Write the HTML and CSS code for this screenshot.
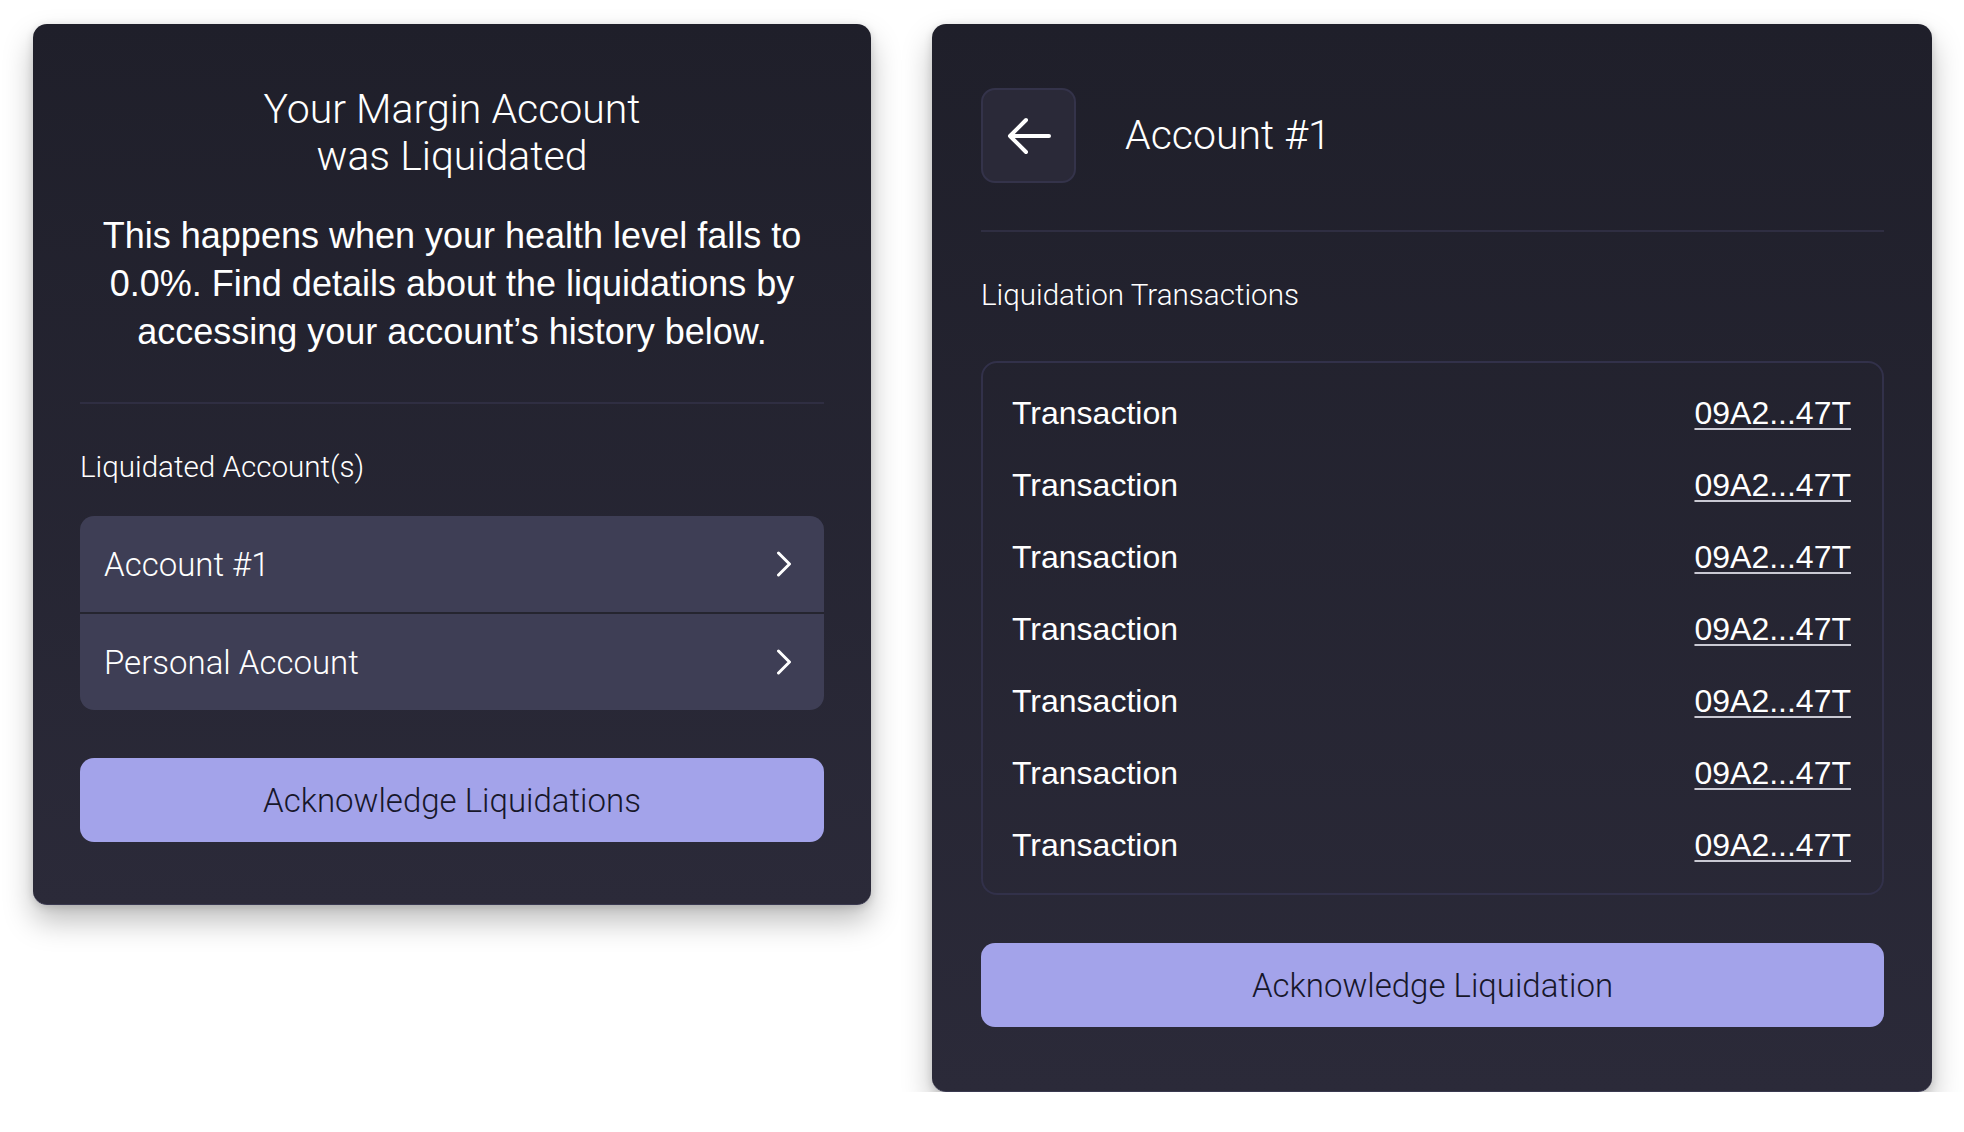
FILE: index.html
```html
<!DOCTYPE html>
<html lang="en">
<head>
<meta charset="utf-8">
<title>Liquidations</title>
<link rel="stylesheet" href="styles.css">
</head>
<body>
<main class="page">
  <section class="card card-left">
    <h1 class="title">Your Margin Account<br>was Liquidated</h1>
    <p class="lead">This happens when your health level falls to 0.0%. Find details about the liquidations by accessing your account’s history below.</p>
    <hr class="divider">
    <h2 class="label">Liquidated Account(s)</h2>
    <ul class="account-list">
      <li class="account-row">
        <span>Account #1</span>
        <svg class="chevron" viewBox="0 0 16 26" width="16" height="26"><path d="M2.5 2 L13.5 13 L2.5 24" fill="none" stroke="#fff" stroke-width="3" stroke-linecap="round" stroke-linejoin="round"/></svg>
      </li>
      <li class="account-row">
        <span>Personal Account</span>
        <svg class="chevron" viewBox="0 0 16 26" width="16" height="26"><path d="M2.5 2 L13.5 13 L2.5 24" fill="none" stroke="#fff" stroke-width="3" stroke-linecap="round" stroke-linejoin="round"/></svg>
      </li>
    </ul>
    <button class="primary-btn">Acknowledge Liquidations</button>
  </section>

  <section class="card card-right">
    <header class="detail-header">
      <button class="back-btn" aria-label="Back">
        <svg viewBox="0 0 48 40" width="48" height="40"><path d="M44 20 H5 M21 4 L5 20 L21 36" fill="none" stroke="#fff" stroke-width="4" stroke-linecap="round" stroke-linejoin="round"/></svg>
      </button>
      <h1 class="detail-title">Account #1</h1>
    </header>
    <hr class="divider divider-right">
    <h2 class="label">Liquidation Transactions</h2>
    <ul class="tx-box">
      <li class="tx-row"><span>Transaction</span><a class="tx-link" href="#">09A2...47T</a></li>
      <li class="tx-row"><span>Transaction</span><a class="tx-link" href="#">09A2...47T</a></li>
      <li class="tx-row"><span>Transaction</span><a class="tx-link" href="#">09A2...47T</a></li>
      <li class="tx-row"><span>Transaction</span><a class="tx-link" href="#">09A2...47T</a></li>
      <li class="tx-row"><span>Transaction</span><a class="tx-link" href="#">09A2...47T</a></li>
      <li class="tx-row"><span>Transaction</span><a class="tx-link" href="#">09A2...47T</a></li>
      <li class="tx-row"><span>Transaction</span><a class="tx-link" href="#">09A2...47T</a></li>
    </ul>
    <button class="primary-btn">Acknowledge Liquidation</button>
  </section>
</main>
</body>
</html>
```

FILE: styles.css
```css
* { box-sizing: border-box; }

html, body {
  margin: 0;
  padding: 0;
  background: #ffffff;
}

body {
  font-family: "Liberation Sans", Arial, sans-serif;
  color: #ffffff;
}

.page {
  display: flex;
  align-items: flex-start;
  gap: 61px;
  padding: 24px 0 0 33px;
}

.card {
  display: flex;
  flex-direction: column;
  background: linear-gradient(180deg, #1f1f2a 0%, #2b2a39 100%);
  border-radius: 14px;
  box-shadow: 0 16px 30px rgba(0, 0, 0, 0.26), 0 2px 8px rgba(0, 0, 0, 0.14);
  border-bottom: 1px solid #3a3950;
}

.card-left {
  width: 838px;
  height: 881px;
  padding: 62px 47px 0 47px;
}

.card-right {
  width: 1000px;
  height: 1068px;
  padding: 64px 48px 0 49px;
}

.title {
  margin: 0;
  font-family: "Roboto", "Liberation Sans", sans-serif;
  font-weight: 300;
  font-size: 41px;
  line-height: 47px;
  text-align: center;
  color: #ffffff;
}

.lead {
  margin: 32px 0 0 0;
  font-size: 36px;
  line-height: 48px;
  text-align: center;
  color: #ffffff;
}

.divider {
  margin: 46px 0 0 0;
  border: 0;
  height: 2px;
  background: #2f2e42;
}

.divider-right {
  margin-top: 47px;
}

.label {
  margin: 46px 0 0 0;
  font-family: "Roboto", "Liberation Sans", sans-serif;
  font-weight: 300;
  font-size: 29.6px;
  line-height: 34px;
  color: #ffffff;
}

.account-list {
  list-style: none;
  margin: 32px 0 0 0;
  padding: 0;
  border-radius: 14px;
  overflow: hidden;
  background: #25252f;
  display: flex;
  flex-direction: column;
  gap: 2px;
}

.account-row {
  height: 96px;
  display: flex;
  align-items: center;
  justify-content: space-between;
  padding: 0 32px 0 24px;
  background: #3e3e55;
  font-family: "Roboto", "Liberation Sans", sans-serif;
  font-weight: 300;
  font-size: 33px;
  color: #ffffff;
}

.chevron {
  display: block;
}

.primary-btn {
  margin-top: 48px;
  height: 84px;
  width: 100%;
  border: 0;
  border-radius: 14px;
  background: #a3a3ea;
  color: #17172a;
  font-family: "Roboto", "Liberation Sans", sans-serif;
  font-weight: 300;
  font-size: 33px;
  cursor: pointer;
}

.detail-header {
  display: flex;
  align-items: center;
  gap: 49px;
}

.back-btn {
  width: 95px;
  height: 95px;
  border-radius: 14px;
  border: 2px solid #34334a;
  background: #2a2938;
  display: flex;
  align-items: center;
  justify-content: center;
  padding: 0;
}

.back-btn svg {
  display: block;
}

.detail-title {
  margin: 0;
  font-family: "Roboto", "Liberation Sans", sans-serif;
  font-weight: 300;
  font-size: 41px;
  line-height: 47px;
  color: #ffffff;
}

.tx-box {
  list-style: none;
  margin: 49px 0 0 0;
  padding: 14px 31px 12px 29px;
  height: 534px;
  border: 2px solid #32314a;
  border-radius: 16px;
}

.tx-row {
  height: 72px;
  display: flex;
  align-items: center;
  justify-content: space-between;
  font-size: 32px;
  color: #ffffff;
}

.tx-link {
  color: #ffffff;
  text-decoration: underline;
  text-decoration-color: #c9c9d3;
  text-decoration-thickness: 2px;
  text-underline-offset: 4px;
}
```
